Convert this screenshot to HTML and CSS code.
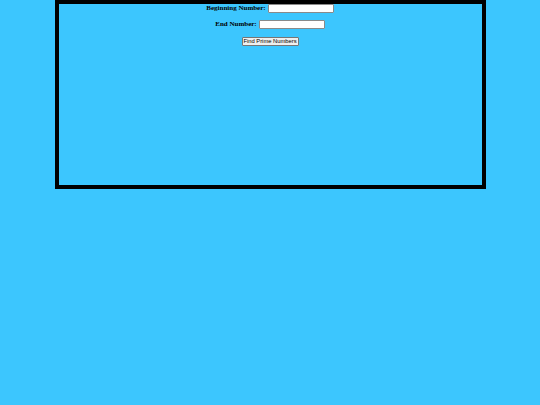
FILE: index.html
```html
<!DOCTYPE html>
<html>
<head>
<meta charset="utf-8">
<title>Prime Numbers</title>
<link rel="stylesheet" href="styles.css">
</head>
<body>
<div class="frame">
  <form class="form">
    <div class="row">
      <label class="label" for="begin">Beginning Number:</label>
      <input class="field" id="begin" type="text">
    </div>
    <div class="row">
      <label class="label" for="end">End Number:</label>
      <input class="field" id="end" type="text">
    </div>
    <div class="row">
      <button class="btn" type="button">Find Prime Numbers</button>
    </div>
  </form>
</div>
</body>
</html>
```
FILE: styles.css
```css
html, body {
  margin: 0;
  padding: 0;
  background: #3cc6fe;
}
.frame {
  width: 423px;
  height: 181px;
  margin: 0 auto;
  border: 4px solid #000;
  background: #3cc6fe;
}
.form {
  display: flex;
  flex-direction: column;
  align-items: center;
  gap: 7px;
  margin: 0;
}
.row {
  display: flex;
  align-items: center;
  justify-content: center;
  gap: 2px;
  height: 9px;
}
.label {
  font-family: "Liberation Serif", "Times New Roman", serif;
  font-weight: bold;
  font-size: 7px;
  color: #000;
  line-height: 9px;
}
.field {
  box-sizing: border-box;
  width: 66px;
  height: 9px;
  margin: 0;
  padding: 0;
  background: #fff;
  border: 1px solid #8a8a8a;
  border-radius: 1px;
}
.btn {
  box-sizing: border-box;
  width: 57px;
  height: 9px;
  margin: 1px 0 0;
  padding: 0;
  font-family: "Liberation Sans", Arial, sans-serif;
  font-size: 5.8px;
  line-height: 6px;
  color: #000;
  background: #efefef;
  border: 1px solid #767676;
  border-radius: 1px;
  white-space: nowrap;
}
```
